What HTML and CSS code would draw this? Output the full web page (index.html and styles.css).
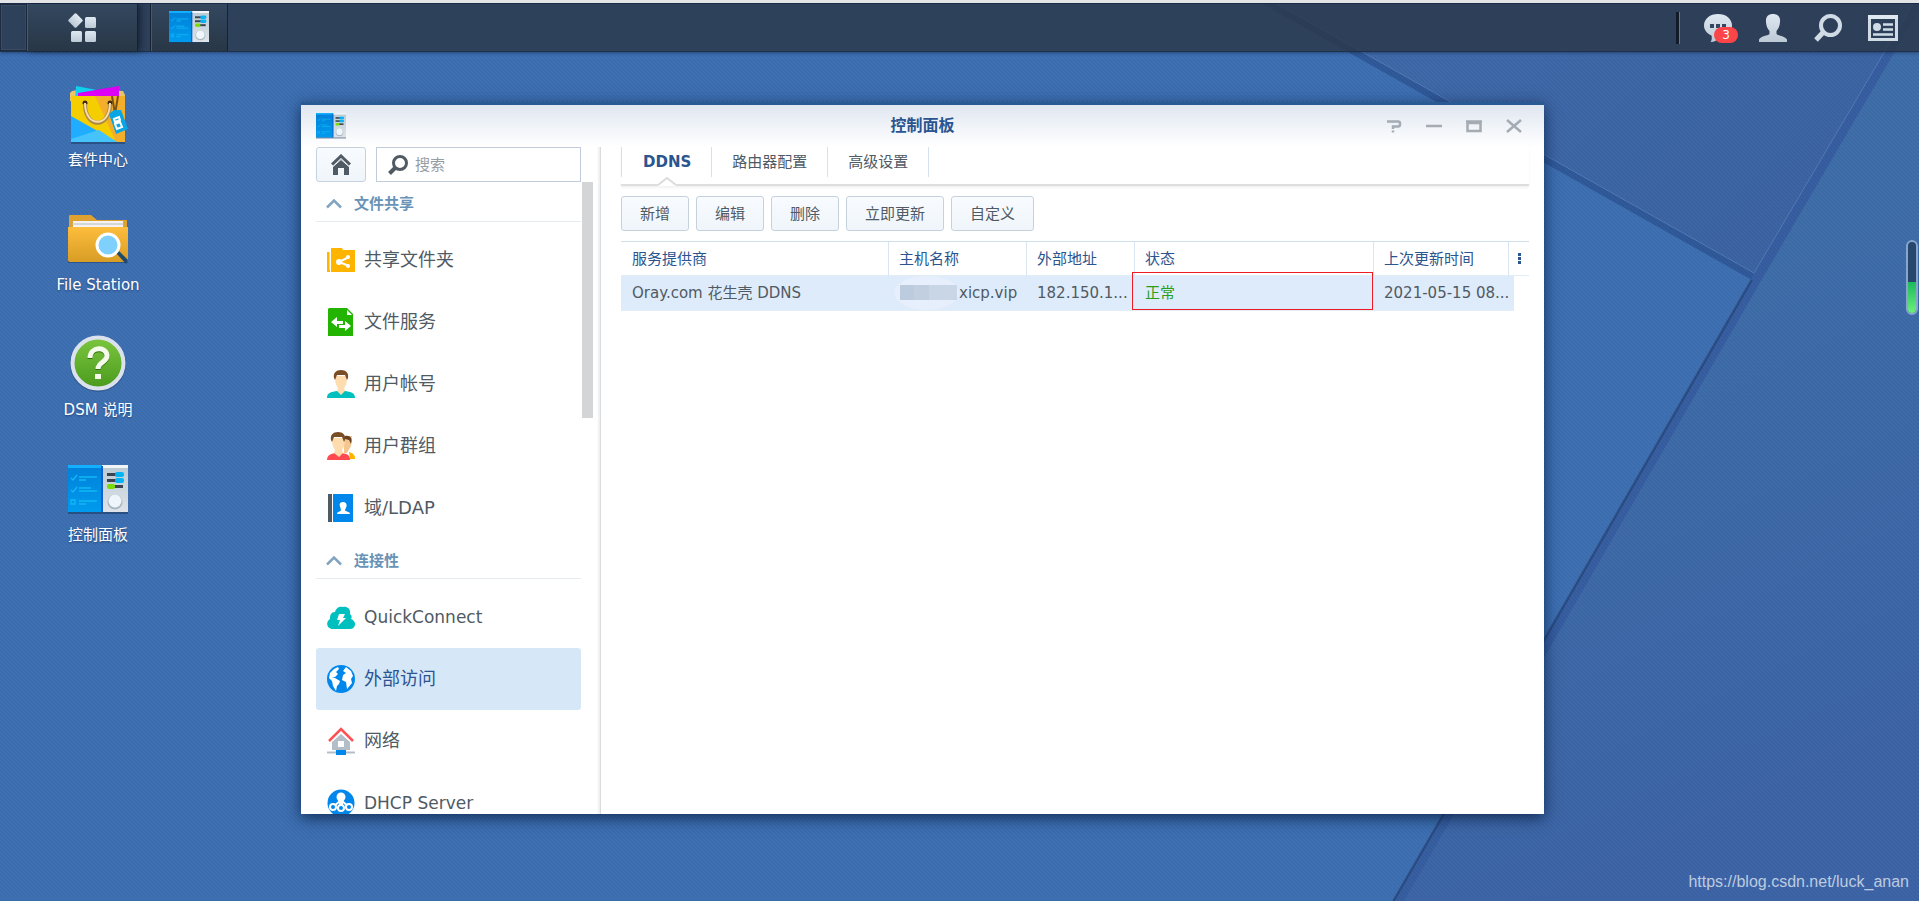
FILE: index.html
```html
<!DOCTYPE html>
<html lang="zh-CN">
<head>
    <meta charset="UTF-8">
    <meta name="viewport" content="width=device-width, initial-scale=1.0">
    <title>控制面板</title>
    <link rel="stylesheet" href="styles.css">
</head>
<body>
    <!-- shared icons -->
    <svg class="sprite" aria-hidden="true">
        <defs>
            <linearGradient id="gCpBlue" x1="0" y1="0" x2="0" y2="1"><stop offset="0" stop-color="#007fd8"/><stop offset="1" stop-color="#009bee"/></linearGradient>
            <linearGradient id="gCpGray" x1="0" y1="0" x2="0" y2="1"><stop offset="0" stop-color="#b9cad3"/><stop offset="1" stop-color="#dfe3e9"/></linearGradient>
            <linearGradient id="gTray" x1="0" y1="0" x2="0" y2="1"><stop offset="0" stop-color="#dfe8f1"/><stop offset="1" stop-color="#bccad6"/></linearGradient>
        </defs>
        <symbol id="icon-panel" viewBox="0 0 60 50" preserveAspectRatio="none">
            <rect y="2" width="60" height="47" fill="#1d3c66" opacity=".6"/>
            <rect width="34" height="47" fill="url(#gCpBlue)"/>
            <rect width="34" height="3" fill="#12b0ff"/>
            <rect x="34" width="26" height="47" fill="url(#gCpGray)"/>
            <rect x="34" width="26" height="3" fill="#f2f5f8"/>
            <rect x="33" y="1" width="2" height="46" fill="#0a62cf"/>
            <path d="M3 13l2 2 4-5M3 25l2 2 4-5M3 35h4v4H3zM11 12h18M11 15h7M11 23h12M11 26h18M11 36h18M11 39h7" fill="none" stroke="#10b9f5" stroke-width="1.3"/>
            <rect x="39" y="8" width="10" height="3" fill="#3b4450"/>
            <rect x="47" y="7" width="9" height="5" rx="2" fill="#00b4f5"/>
            <rect x="39" y="14" width="10" height="3" fill="#3b4450"/>
            <rect x="47" y="13" width="9" height="5" rx="2" fill="#00b4f5"/>
            <rect x="45" y="20" width="10" height="3" fill="#3b4450"/>
            <rect x="39" y="19" width="8" height="5" rx="2" fill="#78dd05"/>
            <circle cx="47" cy="37" r="7.5" fill="#aab8c2"/>
            <circle cx="47" cy="36" r="6.5" fill="#eef6fb"/>
        </symbol>
    </svg>

    <svg class="wallpaper" viewBox="0 0 1919 901" preserveAspectRatio="xMaxYMin slice" aria-hidden="true">
        <defs>
            <linearGradient id="gTop" gradientUnits="userSpaceOnUse" x1="1500" y1="0" x2="1760" y2="270"><stop offset="0" stop-color="#3d68a7"/><stop offset="1" stop-color="#3b62a1"/></linearGradient>
            <linearGradient id="gRight" gradientUnits="userSpaceOnUse" x1="1700" y1="300" x2="1919" y2="750"><stop offset="0" stop-color="#3d6ca7"/><stop offset="1" stop-color="#3c63a5"/></linearGradient>
            <pattern id="weave" width="4" height="4" patternUnits="userSpaceOnUse">
                <path d="M0 0h1v1H0zM1 1h1v1H1zM2 2h1v1H2zM3 3h1v1H3z" fill="#fff" opacity=".02"/>
                <path d="M2 0h1v1H2zM1 3h1v1H1zM3 1h1v1H3z" fill="#000" opacity=".04"/>
            </pattern>
        </defs>
        <rect width="1919" height="901" fill="#3c6eb0"/>
        <path d="M1270 0L1754 273 1915 0z" fill="url(#gTop)"/>
        <path d="M1915 0L1754 273 1392 901H1919V0z" fill="url(#gRight)"/>
        <path d="M1270 0L1754 273 1752 280 1256 0z" fill="#2f5898"/>
        <path d="M1915 0L1754 273 1392 901h12L1762 279 1919 10V0z" fill="#365d9f"/>
        <path d="M1270 0L1754 273 1915 0" fill="none" stroke="#5179b1"/>
        <path d="M1752 280L1392 904" fill="none" stroke="#294b80" stroke-width="2"/>
        <rect width="1919" height="901" fill="url(#weave)"/>
    </svg>

    <header class="taskbar">
        <span class="taskbar-edge"></span>
        <button class="main-menu" aria-label="主菜单">
            <svg width="28" height="30" viewBox="0 0 28 30" fill="url(#gTray)"><rect x="2" y="2" width="11" height="11" rx="1.5" transform="rotate(45 7.500 7.500)"/><rect x="17" y="4" width="11" height="11" rx="1.500"/><rect x="3" y="18" width="11" height="11" rx="1.500"/><rect x="17" y="18" width="11" height="11" rx="1.500"/></svg>
        </button>
        <button class="task-app" aria-label="控制面板"><svg width="40" height="33"><use href="#icon-panel"/></svg></button>
        <div class="tray">
            <button class="tray-btn" aria-label="通知">
                <svg width="28" height="28" viewBox="0 0 28 28"><path d="M14 0C6 0 0 4.800 0 11.500 0 16 3 19.500 7.500 21.500 8 24 8 26 6.500 28c4 0 7-2 9-5C23 22.500 28 18 28 11.500 28 4.800 22 0 14 0z" fill="url(#gTray)"/><path d="M6 10h4v4H6zM12 10h4v4h-4zM18 10h4v4h-4z" fill="#33475f"/></svg>
                <span class="badge">3</span>
            </button>
            <button class="tray-btn" aria-label="选项"><svg width="28" height="28" viewBox="0 0 28 28"><path d="M14 0c5 0 7.500 3 7 8-.3 5-2 7-3.500 9v3c2 2 8 1.500 10.500 5.500V28H0v-2.500C2.500 21.500 8.500 22 10.500 20v-3C9 15 7.300 13 7 8 6.500 3 9 0 14 0z" fill="url(#gTray)"/></svg></button>
            <button class="tray-btn" aria-label="搜索"><svg width="28" height="28" viewBox="0 0 28 28" fill="none" stroke="#d0dbe6"><circle cx="16.500" cy="11.500" r="9.500" stroke-width="4"/><path d="M9 18.500L2 26" stroke-width="5"/></svg></button>
            <button class="tray-btn" aria-label="小组件"><svg width="30" height="28" viewBox="0 0 30 28"><rect x="1.500" y="2.500" width="27" height="23" fill="none" stroke="#d0dbe6" stroke-width="3"/><path d="M0 1h30v4H0z" fill="#dfe8f1"/><circle cx="9" cy="13" r="4" fill="#d0dbe6"/><path d="M15 10.500h10M15 15.500h10M5 20.500h20" stroke="#d0dbe6" stroke-width="2.400"/></svg></button>
        </div>
    </header>

    <main class="desktop">
        <nav class="shortcuts">
            <a class="shortcut" href="#">
                <svg width="60" height="60" viewBox="0 0 60 60"><path d="M3 58h54v2H3z" fill="#2b5284"/><path d="M4 7l6-1 45 1 2 4v6H2V9z" fill="#e9c46b"/><path d="M8 2l26 5v9H7z" fill="#0fd0ee"/><path d="M10 9l41-7v14H10z" fill="#dc00f5"/><path d="M3 12h54v46H3z" fill="#f5ce00"/><path d="M27 12h30v46h-9z" fill="#f3ae2b"/><path d="M3 32l46 26H3z" fill="#20adff"/><path d="M3 55l28-9 18 12H3z" fill="#46c3fb"/><circle cx="17" cy="19" r="2.500" fill="#402a10"/><circle cx="42" cy="19" r="2.500" fill="#402a10"/><path d="M17 20c0 25 25 25 25 0" fill="none" stroke="#a98645" stroke-width="4"/><path d="M17 19c0 25 25 25 25 0" fill="none" stroke="#f6dca8" stroke-width="2"/><path d="M44 12l3 18M50 12l-3 18" stroke="#7a5413" stroke-width="2"/><path d="M41 30l5-4 7 0 7 19-12 5z" fill="#07a7e5"/><path d="M46 35l5-2 1 3-5 2zM47 40l5-2 2 5-5 2z" fill="none" stroke="#fff" stroke-width="2"/></svg>
                <span>套件中心</span>
            </a>
            <a class="shortcut" href="#">
                <svg width="60" height="60" viewBox="0 0 60 60"><defs><linearGradient id="gFold" x1="0" y1="0" x2="0" y2="1"><stop offset="0" stop-color="#fdbd3d"/><stop offset="1" stop-color="#d89d25"/></linearGradient></defs><path d="M1 7q0-1 1-1h21l6 5h30v12H1z" fill="#dfa231"/><path d="M5 12h50v8H5z" fill="#f3f3f3"/><path d="M4 15h52" stroke="#b9b9b9"/><rect y="52" width="60" height="2" fill="#26497d" opacity=".7"/><path d="M0 18h60v33q0 2-2 2H2q-2 0-2-2z" fill="url(#gFold)"/><path d="M48 44l3-2 9 9-2 4z" fill="#1e4a6d"/><circle cx="40" cy="36" r="11" fill="#7fd0fc" stroke="#fff" stroke-width="3"/></svg>
                <span>File Station</span>
            </a>
            <a class="shortcut" href="#">
                <svg width="60" height="60" viewBox="0 0 60 60"><defs><linearGradient id="gHelp" x1="0" y1="0" x2="0" y2="1"><stop offset="0" stop-color="#7cc63e"/><stop offset="1" stop-color="#4a9a1d"/></linearGradient></defs><circle cx="30" cy="30" r="28" fill="#2b4f80" opacity=".6"/><circle cx="30" cy="29" r="25.500" fill="url(#gHelp)" stroke="#dbe2ee" stroke-width="4"/><path d="M22 25c0-12 17-12 17-2 0 6-9 6-9 13" fill="none" stroke="#326f13" stroke-width="5"/><path d="M22 24c0-12 17-12 17-2 0 6-9 6-9 13" fill="none" stroke="#f5fbea" stroke-width="5"/><path d="M27 40h6v5h-6z" fill="#f5fbea"/></svg>
                <span>DSM 说明</span>
            </a>
            <a class="shortcut" href="#">
                <svg width="60" height="60" viewBox="0 0 60 60"><use href="#icon-panel" y="6" width="60" height="50"/></svg>
                <span>控制面板</span>
            </a>
        </nav>

        <section class="window">
            <div class="titlebar">
                <svg class="title-icon" width="30" height="26"><use href="#icon-panel"/></svg>
                <h1>控制面板</h1>
                <div class="controls">
                    <button aria-label="帮助"><svg width="16" height="16" viewBox="0 0 16 16"><path d="M1 3.500h11q2 0 2 2v1q0 2-2 2H7v2.500M7 12.500v2" /></svg></button>
                    <button aria-label="最小化"><svg width="16" height="16" viewBox="0 0 16 16"><path d="M0 8h16"/></svg></button>
                    <button aria-label="最大化"><svg width="16" height="16" viewBox="0 0 16 16"><path d="M1.500 4v9h13V4M0 3.500h16" /><path d="M1 5h14"/></svg></button>
                    <button aria-label="关闭"><svg width="16" height="16" viewBox="0 0 16 16"><path d="M1 2l14 12M15 2L1 14"/></svg></button>
                </div>
            </div>

            <div class="window-body">
                <aside class="sidebar">
                    <div class="sidebar-tools">
                        <button class="btn home-btn" aria-label="主页"><svg width="20" height="21" viewBox="0 0 20 21"><path d="M1 10.500L10 2l9 8.500" fill="none" stroke="#505a64" stroke-width="3"/><path d="M2 12l8-7 8 7v9h-5v-7H7v7H2z" fill="#505a64"/><path d="M1 11l9-8 9 8" fill="none" stroke="#f4f8fc" transform="translate(0 2.500)"/></svg></button>
                        <label class="search">
                            <svg width="20" height="20" viewBox="0 0 20 20" fill="none" stroke="#505a64"><circle cx="12" cy="8" r="6.500" stroke-width="3"/><path d="M7 13l-5.500 5.500" stroke-width="4"/></svg>
                            <input type="text" placeholder="搜索" aria-label="搜索">
                        </label>
                    </div>

                    <div class="nav-scroll">
                        <nav class="nav">
                            <h2 class="nav-title"><svg width="16" height="10" viewBox="0 0 16 10"><path d="M1 8.500l7-7 7 7"/></svg>文件共享</h2>
                            <div class="nav-group">
                                <a class="nav-item" href="#"><svg width="28" height="28" viewBox="0 0 28 28"><path d="M4 2h11l1 2h12v22H4zM0 6h3v20H0z" fill="#ffb400"/><path d="M3 6v18" stroke="#fff"/><path d="M22 11L12 16l10 4" fill="none" stroke="#fff" stroke-width="2"/><circle cx="12" cy="16" r="3" fill="#fff"/><circle cx="21" cy="11" r="2" fill="#fff"/><circle cx="21" cy="20" r="2" fill="#fff"/></svg>共享文件夹</a>
                                <a class="nav-item" href="#"><svg width="28" height="28" viewBox="0 0 28 28"><path d="M2 0h18l6 6v22H1V1z" fill="#22b400"/><path d="M20 2v5h5z" fill="#fff"/><path d="M10 9l-6 5 6 5v-3h6v-3h-6zM18 13l6 5-6 5v-3h-6v-3h6z" fill="#fff"/></svg>文件服务</a>
                                <a class="nav-item" href="#"><svg width="28" height="28" viewBox="0 0 28 28"><path d="M0 28c0-6 5-6 10-7h8c5 1 10 1 10 7z" fill="#00bfbf"/><path d="M8 6h12c0 7-1 9-3 12l1 3-4 4-4-4 1-3C9 15 8 13 8 6z" fill="#ffdcae"/><path d="M7 8c-1-5 2-8 7-8s8 3 7 8l-1 2-2-5h-8l-2 5z" fill="#7a4d25"/></svg>用户帐号</a>
                                <a class="nav-item" href="#"><svg width="28" height="28" viewBox="0 0 28 28"><path d="M20 4h5l-1 10-4 7h-3V6z" fill="#f5c68e"/><path d="M18 4c5-1 8 2 6 8l-2-4-4-1z" fill="#6a4221"/><path d="M22 20c4 1 6 3 6 7h-5z" fill="#ffb400"/><path d="M0 28c0-5 4-6 8-7h7c5 1 8 2 8 7z" fill="#ff4b50"/><path d="M5 6h13c0 7-1 9-3 12l1 3-4 4-5-4 1-3C6 15 5 13 5 6z" fill="#ffdcae"/><path d="M4 8c-1-5 2-8 7-8s8 3 7 8l-1 2-2-5H7l-2 5z" fill="#7a4d25"/></svg>用户群组</a>
                                <a class="nav-item" href="#"><svg width="28" height="28" viewBox="0 0 28 28"><path d="M1 0h4v28H1z" fill="#505a64"/><path d="M6 0h20v28H6z" fill="#0087eb"/><path d="M16 8c3 0 4 2 3.500 4.500L18 16c0 2 5 1 5 4H10c0-3 4-2 4-4l-1-3.500C12 10 13 8 16 8z" fill="#fff"/></svg>域/LDAP</a>
                            </div>

                            <h2 class="nav-title"><svg width="16" height="10" viewBox="0 0 16 10"><path d="M1 8.500l7-7 7 7"/></svg>连接性</h2>
                            <div class="nav-group">
                                <a class="nav-item" lang="en" href="#"><svg width="28" height="28" viewBox="0 0 28 28"><path d="M6 26c-6 0-8-7-3-10 0-4 1-7 5-7 1-4 4-6 8-5 4-1 8 2 7 7 2 2 2 3 1 5 6 2 5 10-1 10z" fill="#00bfbf"/><path d="M12 11h6l-2 4h3l-8 8 2-6h-3z" fill="#fff"/></svg>QuickConnect</a>
                                <a class="nav-item active" href="#"><svg width="28" height="28" viewBox="0 0 28 28"><circle cx="14" cy="14" r="14" fill="#0087eb"/><path d="M11 2l1 2-3 3 2 2-3 3-3 0 3 1 5 3-1 3-2 2-1 5-3-5-1-5-3-3 1-5 4-4zM19 2l5 4 2 5-2 3 1 4-5 6-1-7-4-2 1-5 3-2-3-2z" fill="#fff"/></svg>外部访问</a>
                                <a class="nav-item" href="#"><svg width="28" height="28" viewBox="0 0 28 28"><path d="M14 7l9 8v8H5v-8z" fill="#b3bec9"/><path d="M11 14h6v6h-6z" fill="#fff"/><path d="M2 14L14 2l12 12" fill="none" stroke="#ff5053" stroke-width="2.500"/><path d="M0 24.500h28v2H0z" fill="#b3bec9"/><path d="M9 23h10v5H9z" fill="#0087eb"/></svg>网络</a>
                                <a class="nav-item" lang="en" href="#"><svg width="28" height="28" viewBox="0 0 28 28"><circle cx="14" cy="14" r="13.500" fill="#0087eb"/><circle cx="14" cy="8" r="4.500" fill="#fff"/><path d="M12 11h4v6h-4z" fill="#fff"/><g fill="#0087eb" stroke="#fff" stroke-width="2"><path d="M13 12l-7 6M15 12l7 6"/><circle cx="6" cy="18" r="3"/><circle cx="14" cy="19" r="3"/><circle cx="22" cy="18" r="3"/></g></svg>DHCP Server</a>
                            </div>
                        </nav>
                        <div class="scroll-track"><div class="scroll-thumb"></div></div>
                    </div>
                </aside>

                <div class="content">
                    <div class="tabs">
                        <button class="tab active">DDNS<svg class="notch" width="18" height="9" viewBox="0 0 18 9"><path d="M0 9V8l9-7 9 7v1z" fill="#fff"/><path d="M0 8l9-7 9 7" fill="none" stroke="#dcdcdc" stroke-width="2"/></svg></button>
                        <button class="tab">路由器配置</button>
                        <button class="tab">高级设置</button>
                    </div>

                    <div class="toolbar">
                        <button class="btn">新增</button>
                        <button class="btn">编辑</button>
                        <button class="btn">删除</button>
                        <button class="btn">立即更新</button>
                        <button class="btn">自定义</button>
                    </div>

                    <table class="grid">
                        <colgroup>
                            <col class="col-provider"><col class="col-host"><col class="col-address"><col class="col-status"><col class="col-time"><col class="col-gap"><col class="col-more">
                        </colgroup>
                        <thead>
                            <tr>
                                <th>服务提供商</th>
                                <th>主机名称</th>
                                <th>外部地址</th>
                                <th>状态</th>
                                <th>上次更新时间</th>
                                <th class="more" colspan="2"><button aria-label="列"><svg width="3" height="11" viewBox="0 0 3 11" fill="#2a5590"><path d="M0 0h3v3H0zM0 4h3v3H0zM0 8h3v3H0z"/></svg></button></th>
                            </tr>
                        </thead>
                        <tbody>
                            <tr>
                                <td>Oray.com 花生壳 DDNS</td>
                                <td><span class="host"><span class="mask"><i></i><i></i><i></i><i></i></span>xicp.vip</span></td>
                                <td>182.150.1...</td>
                                <td class="status">正常</td>
                                <td colspan="2">2021-05-15 08...</td>
                                <td class="blank"></td>
                            </tr>
                        </tbody>
                    </table>
                </div>
            </div>
        </section>

        <div class="gauge"><div class="gauge-fill"></div></div>
        <p class="watermark">https://blog.csdn.net/luck_anan</p>
    </main>
</body>
</html>
```
FILE: styles.css
```css
* {
    box-sizing: border-box;
}

body {
    margin: 0;
    height: 100vh;
    display: flex;
    flex-direction: column;
    overflow: hidden;
    position: relative;
    border-top: 3px solid #e2e4e6;
    background: #3c6eb0;
    color: #505a64;
    font-family: "DejaVu Sans", "Noto Sans CJK SC", sans-serif;
    font-size: 15px;
    line-height: 20px;
}

button, input {
    font: inherit;
    color: inherit;
    border: none;
    background: none;
    padding: 0;
    margin: 0;
}

button {
    cursor: pointer;
}

a {
    color: inherit;
    text-decoration: none;
}

svg {
    display: block;
    flex-shrink: 0;
}

.sprite {
    position: absolute;
    width: 0;
    height: 0;
}

.wallpaper {
    position: absolute;
    top: -3px;
    left: 0;
    width: 100%;
    height: 100vh;
    z-index: -1;
}

/* taskbar */
.taskbar {
    display: flex;
    height: 49px;
    background: rgba(42, 54, 70, 0.8);
    border-top: 1px solid #1b2b49;
    border-bottom: 1px solid #1f3048;
    box-shadow: 0 1px 3px rgba(15, 35, 70, 0.5);
}

.taskbar-edge {
    width: 27px;
    border: 1px solid #1e2c40;
    box-shadow: inset 0 0 0 1px #3a4c62;
}

.main-menu, .task-app {
    display: flex;
    align-items: center;
    justify-content: center;
    background: linear-gradient(#33475f, #283746);
    border-right: 1px solid #18222f;
    box-shadow: inset 1px 0 #475a70;
}

.main-menu {
    width: 111px;
    margin-right: 12px;
    box-shadow: inset 1px 0 #475a70, 3px 0 6px rgba(10, 20, 35, 0.6);
}

.task-app {
    width: 78px;
    border-left: 1px solid #18222f;
}

.tray {
    display: flex;
    align-items: center;
    margin-left: auto;
    padding-right: 9px;
}

.tray::before {
    content: "";
    width: 3px;
    height: 32px;
    margin-right: 10px;
    background: #121b28;
    border-right: 1px solid #66778b;
}

.tray-btn {
    width: 55px;
    display: flex;
    justify-content: center;
    position: relative;
}

.badge {
    position: absolute;
    left: 24px;
    top: 13px;
    width: 24px;
    height: 16px;
    border-radius: 8px;
    background: #fb4549;
    color: #fff;
    font-size: 12px;
    line-height: 16px;
}

/* desktop */
.desktop {
    flex: 1;
    min-height: 0;
    position: relative;
}

.shortcuts {
    width: 196px;
    padding-top: 32px;
    display: flex;
    flex-direction: column;
    align-items: center;
    gap: 39px;
}

.shortcut {
    display: flex;
    flex-direction: column;
    align-items: center;
    gap: 6px;
    color: #fff;
    text-shadow: 0 1px 2px rgba(0, 20, 60, 0.4);
}

/* window */
.window {
    position: absolute;
    top: 50px;
    left: 301px;
    right: 375px;
    bottom: 87px;
    display: flex;
    flex-direction: column;
    background: #fff;
    border-top: 3px solid #2a5a94;
    box-shadow: 0 4px 14px rgba(5, 25, 60, 0.75);
}

.titlebar {
    height: 42px;
    display: grid;
    grid-template-columns: 1fr auto 1fr;
    align-items: center;
    padding: 0 10px;
    background: linear-gradient(#e0e7f1, #fff);
}

.title-icon {
    margin-left: 5px;
}

.titlebar h1 {
    margin: 0;
    font-size: 16px;
    line-height: 24px;
    color: #2a5590;
}

.controls {
    display: flex;
    justify-content: flex-end;
}

.controls button {
    width: 40px;
    height: 24px;
    display: flex;
    align-items: center;
    justify-content: center;
}

.controls svg {
    fill: none;
    stroke: #a4abb3;
    stroke-width: 2.5;
}

.window-body {
    flex: 1;
    min-height: 0;
    display: flex;
}

.btn {
    height: 35px;
    padding: 0 18px;
    border: 1px solid #c5d2de;
    border-radius: 3px;
    background: linear-gradient(#f8fbff, #eff5fa);
}

/* sidebar */
.sidebar {
    width: 300px;
    padding-left: 15px;
    display: flex;
    flex-direction: column;
    border-right: 1px solid #d9dbdd;
    box-shadow: inset -3px 0 2px -1px #eeeff0;
}

.sidebar-tools {
    display: flex;
    gap: 10px;
    margin-right: 19px;
}

.home-btn {
    width: 50px;
    display: flex;
    align-items: center;
    justify-content: center;
}

.search {
    flex: 1;
    min-width: 0;
    display: flex;
    align-items: center;
    gap: 7px;
    padding: 0 11px;
    border: 1px solid #c0cbdc;
}

.search input {
    flex: 1;
    min-width: 0;
    outline: none;
}

.search input::placeholder {
    color: #969da5;
}

.nav-scroll {
    flex: 1;
    min-height: 0;
    display: flex;
    overflow: hidden;
}

.nav {
    width: 265px;
}

.nav-title {
    display: flex;
    align-items: center;
    gap: 12px;
    height: 40px;
    margin: 0;
    padding: 4px 10px 0;
    border-bottom: 1px solid #e6ecf2;
    font-size: 15px;
    color: #6893b6;
}

.nav-title svg {
    fill: none;
    stroke: #82a4c0;
    stroke-width: 2.5;
}

.nav-group {
    padding-top: 7px;
}

.nav-item {
    display: flex;
    align-items: center;
    gap: 9px;
    height: 62px;
    padding: 0 11px;
    border-radius: 3px;
    font-size: 18px;
}

.nav-item:lang(en) {
    font-size: 17px;
}

.nav-item.active {
    background: #d6e7f8;
    color: #2a5590;
}

.scroll-track {
    width: 12px;
    padding-left: 1px;
}

.scroll-thumb {
    height: 236px;
    background: #d3d5d7;
}

/* content */
.content {
    flex: 1;
    min-width: 0;
    padding: 0 15px 0 20px;
}

.tabs {
    display: flex;
    height: 39px;
    padding-bottom: 7px;
    border-bottom: 2px solid #dedede;
    box-shadow: 0 2px 2px #f3f3f3;
}

.tab {
    position: relative;
    padding: 0 20px;
    border-right: 1px solid #d5e2ee;
}

.tab.active {
    padding-left: 21px;
    border-left: 1px solid #d5e2ee;
    color: #2a5590;
    font-weight: bold;
}

.notch {
    position: absolute;
    left: 36px;
    bottom: -9px;
}

.toolbar {
    display: flex;
    gap: 7px;
    padding: 10px 0;
}

.grid {
    width: 100%;
    table-layout: fixed;
    border-collapse: separate;
    border-spacing: 0;
    border-top: 1px solid #d0dfec;
}

.col-provider {
    width: 268px;
}

.col-host {
    width: 138px;
}

.col-address {
    width: 108px;
}

.col-time {
    width: 135px;
}

.col-gap {
    width: 5px;
}

.col-more {
    width: 15px;
}

.grid th, .grid td {
    height: 35px;
    padding: 0 0 0 10px;
    text-align: left;
    white-space: nowrap;
    border-bottom: 1px solid #e3edf6;
}

.grid th {
    height: 34px;
    font-weight: normal;
    color: #2a5590;
    border-right: 1px solid #d9e6f2;
}

.grid td {
    background: #deebfa;
}

.grid th:first-child, .grid td:first-child {
    padding-left: 11px;
}

.grid th.more {
    padding: 0;
    border-right: none;
    text-align: center;
}

.more button {
    display: inline-block;
}

.grid td.blank {
    padding: 0;
    background: #fff;
    border-bottom: none;
}

.host {
    display: flex;
    align-items: center;
}

/* hidden part of the host name */
.mask {
    display: flex;
    width: 65px;
    height: 34px;
    margin-left: -5px;
    padding: 9px 2px 10px 6px;
    border-radius: 50%;
    background: #e6effb;
}

.mask i {
    flex: 1;
    background: #bccbde;
}

.mask i:nth-child(2) {
    background: #c2cfe0;
}

.mask i:nth-child(n+3) {
    background: #c9d6e5;
}

.grid td.status {
    position: relative;
    color: #2c9e1c;
}

.status::after {
    content: "";
    position: absolute;
    top: -4px;
    left: -3px;
    right: 1px;
    bottom: 0;
    border: 1px solid #ed1c24;
}

/* memory gauge at the screen edge */
.gauge {
    position: absolute;
    top: 188px;
    right: 1px;
    width: 12px;
    height: 75px;
    display: flex;
    align-items: flex-end;
    border: 2px solid #86a6cf;
    border-radius: 6px;
    background: #27476f;
    overflow: hidden;
}

.gauge-fill {
    width: 100%;
    height: 43%;
    background: linear-gradient(#1cb95c, #6df07c);
}

.watermark {
    position: absolute;
    right: 10px;
    bottom: 9px;
    margin: 0;
    font-family: "Liberation Sans", Arial, sans-serif;
    font-size: 16px;
    color: #bccbe0;
}
```
